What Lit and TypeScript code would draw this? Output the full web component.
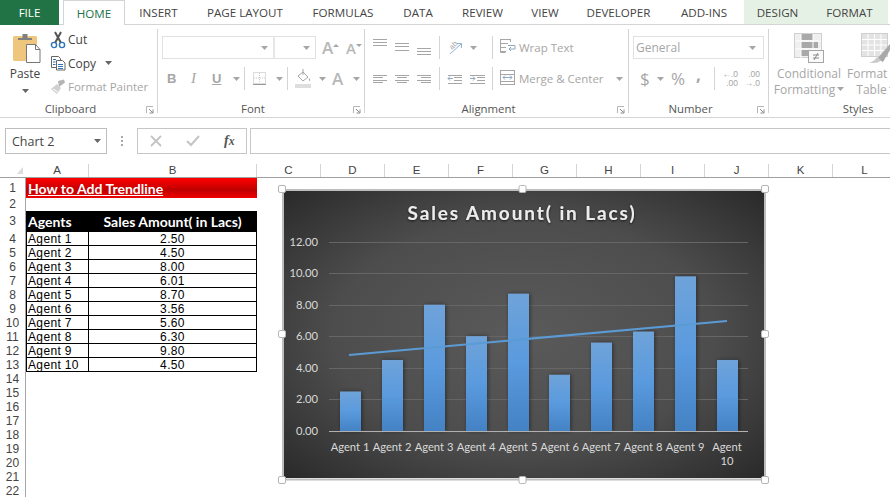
import { LitElement, html, svg, css } from "lit";
import { customElement } from "lit/decorators.js";

const G = "#a6a6a6";
const box = (w: number, c: unknown = "") => html`<span class="box" style="width:${w}px">${c}</span>`;
const ic = (w: number, h: number, c: unknown) => html`<svg class="ic" width=${w} height=${h} viewBox="0 0 ${w} ${h}">${c}</svg>`;
const caret = (col = G) => html`<svg class="ic" width="7" height="4" viewBox="0 0 7 4"><path d="M0 0h7L3.5 4z" fill=${col}/></svg>`;
const sep = () => html`<span class="sep"></span>`;
const launcher = () => html`<svg class="launch" width="8" height="8" viewBox="0 0 8 8"><path d="M.5 7V.5H7" fill="none" stroke="#b5b5b5"/><path d="M3 3l3.5 3.5M7 3.5V7H3.5" fill="none" stroke="#8a8a8a"/></svg>`;
const lines = (rows: number[][], col = G) => svg`<path d=${rows.map((r) => `M${r[0]} ${r[2] + 0.5}H${r[1]}`).join("")} stroke=${col} fill="none"/>`;

const TABS = [
  ["INSERT", 67], ["PAGE LAYOUT", 106], ["FORMULAS", 90], ["DATA", 60], ["REVIEW", 69], ["VIEW", 56], ["DEVELOPER", 91], ["ADD-INS", 80],
] as [string, number][];
const COLS = [["A", 63], ["B", 168], ["C", 64], ["D", 64], ["E", 64], ["F", 64], ["G", 64], ["H", 64], ["I", 64], ["J", 64], ["K", 64], ["L", 64]] as [string, number][];
const DATA = [["Agent 1", "2.50"], ["Agent 2", "4.50"], ["Agent 3", "8.00"], ["Agent 4", "6.01"], ["Agent 5", "8.70"], ["Agent 6", "3.56"], ["Agent 7", "5.60"], ["Agent 8", "6.30"], ["Agent 9", "9.80"], ["Agent 10", "4.50"]];

const scissors = ic(16, 18, svg`
  <path d="M5 1l6 11M11 1L5 12" stroke="#555" stroke-width="2" fill="none"/>
  <circle cx="4" cy="14" r="2.6" fill="none" stroke="#2f75b5" stroke-width="1.4"/>
  <circle cx="12" cy="14" r="2.6" fill="none" stroke="#2f75b5" stroke-width="1.4"/>`);
const copyIcon = ic(16, 16, svg`
  <path d="M1.5 1.5h7l2 2v9h-9z" fill="#fff" stroke="#666"/>
  <path d="M6.5 5.5h6l2.5 2.5v7h-8.5z" fill="#fff" stroke="#666"/>
  <path d="M3 4.5h3M3 7h2.500M3 9.500h2.500M8 9.500h5M8 11.500h5M8 13.500h5" stroke="#2f75b5" fill="none"/>`);
const painter = ic(16, 16, svg`
  <path d="M8 2l6-1.500 1 3-6 4.500z" fill="#b5b5b5"/>
  <path d="M1 10l6-5 4 4-4 6z" fill="#d0d0d0"/>
  <path d="M3 10l5 3" stroke="#fff"/>`);
const pasteIcon = ic(32, 30, svg`<g transform="translate(3 0)">
  <rect x="1" y="3" width="24" height="25" rx="1.500" fill="#eec67e"/>
  <path d="M6 7V5h4.500V1h5v4H20v2z" fill="#7f7f7f"/>
  <path d="M14.500 11.500h9l4.500 5v13h-13.500z" fill="#fff" stroke="#777"/>
  <path d="M23.500 11.500v5H28" fill="none" stroke="#777"/></g>`);

const ALIGN_V = [
  [[0, 14, 3], [0, 14, 6], [0, 14, 9]],
  [[0, 14, 7], [0, 14, 10], [0, 14, 14]],
  [[0, 14, 12], [0, 14, 15], [0, 14, 18]],
];
const ALIGN_H = [
  [[0, 14, 8], [0, 10, 10], [0, 14, 13], [0, 10, 15]],
  [[0, 14, 8], [2, 12, 10], [0, 14, 13], [2, 12, 15]],
  [[0, 14, 8], [4, 14, 10], [0, 14, 13], [4, 14, 15]],
];
const orient = ic(16, 23, svg`
  <text x="0" y="0" transform="translate(5 14) rotate(-45)" font-family="Liberation Sans" font-size="7.500" fill="${G}">ab</text>
  <path d="M3 18L14 8" stroke="#8fb3d5"/><path d="M10 7.500h4.500V12" stroke="#8fb3d5" fill="none"/>`);
const wrapIcon = ic(17, 23, svg`
  ${lines([[0, 11, 3], [0, 8, 7], [0, 6, 11], [0, 6, 15]])}
  <path d="M.5 3.500v13h5M.5 3.500h10V6" fill="none" stroke="${G}"/>
  <path d="M8 9.500h7v3.500H9M11 11l-2 2 2 2" fill="none" stroke="#8fa8c0"/>`);
const mergeIcon = ic(16, 23, svg`
  <rect x=".5" y="3.500" width="14" height="14" fill="none" stroke="${G}"/>
  ${lines([[1, 14, 7], [1, 14, 14]])}
  <path d="M3 10.500h9M5 8.500l-2 2 2 2M10 8.500l2 2-2 2" fill="none" stroke="#8fa8c0"/>`);
const indent = (flip: boolean) => ic(16, 23, svg`
  ${lines([[flip ? 0 : 1, 15, 8], [7, 15, 10], [7, 15, 13], [flip ? 0 : 1, 15, 16]])}
  <path d=${flip ? "M0 11.500h5M3 9.500l2 2-2 2" : "M1 11.500h5M3 9.500l-2 2 2 2"} fill="none" stroke="#8fa8c0"/>`);
const bordersIcon = ic(14, 23, svg`
  <rect x=".5" y="5.500" width="12" height="11" fill="none" stroke="#b9b9b9" stroke-dasharray="1 1"/>
  <path d="M6.500 6v10M1 11h11" stroke="#c9c9c9" stroke-dasharray="1 1"/>
  <path d="M0 17.500h13" stroke="#9a9a9a"/>`);
const fillIcon = ic(17, 23, svg`
  <path d="M3 9l5-4 5 5-5 4z" fill="#fff" stroke="${G}"/>
  <path d="M8 2v6" stroke="${G}"/><path d="M14 11c1 1 1.500 2 1 3-1 0-1.500-1-1-3z" fill="${G}"/>
  <rect x="0" y="17" width="16" height="4" fill="#dedede"/>`);
const condIcon = ic(30, 30, svg`
  <rect x=".5" y=".5" width="27" height="24" fill="#efefef" stroke="#cfcfcf"/>
  <rect x="7" y="1" width="12" height="6" fill="#a9a9a9"/>
  <rect x="7" y="9" width="17" height="6" fill="#a9a9a9"/>
  <rect x="7" y="17" width="7" height="6" fill="#a9a9a9"/>
  <path d="M7 1v24M19 1v24M1 8h26M1 16h26" stroke="#fff"/>
  <rect x="14.500" y="17.500" width="15" height="12" fill="#fafafa" stroke="#a6a6a6"/>
  <path d="M19 22h6M19 25h6M24 20l-4 7" stroke="#8a8a8a" fill="none"/>`);
const tableIcon = ic(30, 30, svg`
  <rect x=".5" y=".5" width="26" height="23" fill="#e3e3e3" stroke="#cfcfcf"/>
  <path d="M7 1v22M13.500 1v22M20 1v22M1 6.500h25M1 12h25M1 17.500h25" stroke="#fff"/>
  <path d="M16 26l13-15v6L22 29z" fill="#a9a9a9"/>
  <path d="M8 30c4-1 6-3 8-6l4 3c-2 3-6 3-12 3z" fill="#c9c9c9"/>`);

const CX = [350, 392, 434, 476, 518, 559.5, 601, 643, 685, 727];
const V = [2.5, 4.5, 8, 6.01, 8.7, 3.56, 5.6, 6.3, 9.8, 4.5];
const Y0 = 431;
const UNIT = 15.78;
const HANDLES = [[282, 189], [522.5, 189], [765, 189], [282, 334], [765, 334], [282, 480], [522.5, 480], [765, 480]];

@customElement("app-chart")
class AppChart extends LitElement {
  static styles = css`
    :host { position: absolute; left: 276px; top: 20px; width: 496px; height: 302px; display: block; }
    svg { display: block; }
    text { font-family: "Open Sans", sans-serif; }
    .t { font-family: Lato, sans-serif; font-weight: 700; font-size: 19px; letter-spacing: 1.9px; fill: #ececec; }
    .l { font-family: Lato, sans-serif; font-size: 11.2px; fill: #d9d9d9; }
  `;
  render() {
    return html`<svg width="496" height="302" viewBox="276 184 496 302">
      <defs>
        <radialGradient id="bg" cx="50%" cy="50%" r="72%">
          <stop offset="0" stop-color="#5a5a5a"/><stop offset=".55" stop-color="#4d4d4d"/><stop offset="1" stop-color="#282828"/>
        </radialGradient>
        <linearGradient id="bar" x1="0" y1="0" x2="0" y2="1">
          <stop offset="0" stop-color="#6fa3d9"/><stop offset=".5" stop-color="#5a9ade"/><stop offset="1" stop-color="#4382c4"/>
        </linearGradient>
        <filter id="sh" x="-30%" y="-10%" width="160%" height="120%"><feDropShadow dx="1" dy="0" stdDeviation="2" flood-color="#000" flood-opacity=".45"/></filter>
        <filter id="ts" x="-5%" y="-20%" width="110%" height="150%"><feDropShadow dx="0" dy="1" stdDeviation=".8" flood-color="#000" flood-opacity=".7"/></filter>
      </defs>
      <rect x="284" y="191" width="480" height="287" fill="url(#bg)"/>
      <rect x="283" y="190" width="482" height="289.500" fill="none" stroke="#bdbdbd" stroke-width="2"/>
      <text class="t" x="522" y="220" text-anchor="middle" filter="url(#ts)">Sales Amount( in Lacs)</text>
      ${[12, 10, 8, 6, 4, 2].map((v) => svg`<path d="M329 ${Math.round(Y0 - v * UNIT) + 0.5}H748" stroke="#666" fill="none"/>`)}
      ${[12, 10, 8, 6, 4, 2, 0].map((v) => svg`<text class="l" x="318" y=${Y0 - v * UNIT + 4} text-anchor="end">${v.toFixed(2)}</text>`)}
      ${CX.map((c, i) => svg`<rect x=${Math.round(c - 10.5)} y=${Y0 - V[i] * UNIT} width="21" height=${V[i] * UNIT} fill="url(#bar)" filter="url(#sh)"/>`)}
      <path d="M329 431.500H748" stroke="#b0b0b0" fill="none"/>
      <path d="M349 355L727 321" stroke="#5b9bd5" stroke-width="2.200" fill="none"/>
      ${CX.slice(0, 9).map((c, i) => svg`<text class="l" x=${c} y="451" text-anchor="middle">Agent ${i + 1}</text>`)}
      <text class="l" x="727" y="451" text-anchor="middle">Agent</text>
      <text class="l" x="727" y="465" text-anchor="middle">10</text>
      ${HANDLES.map((h) => svg`<rect x=${h[0] - 3.5} y=${h[1] - 3.5} width="7" height="7" rx="1.500" fill="#fff" stroke="#b5b5b5"/>`)}
    </svg>`;
  }
}

@customElement("app-root")
export class AppRoot extends LitElement {
  static styles = css`
    :host { display: block; width: 890px; height: 497px; overflow: hidden; background: #fff; color: #444; font-family: "Open Sans", sans-serif; font-size: 12px; }
    .app { display: flex; flex-direction: column; height: 497px; }
    .box { display: inline-flex; align-items: center; height: 23px; flex: none; white-space: nowrap; }
    .ic { display: block; flex: none; }

    .tabs { display: flex; height: 25px; box-sizing: border-box; border-bottom: 1px solid #d4d4d4; flex: none; }
    .tab { display: flex; align-items: center; justify-content: center; height: 24px; box-sizing: border-box; font-size: 11.6px; color: #444; flex: none; }
    .file { width: 59px; height: 25px; background: #217346; color: #fff; margin-right: 4px; }
    .home { width: 62px; height: 25px; background: #fff; color: #217346; border: 1px solid #d4d4d4; border-bottom: 0; }
    .ctx { background: #e6f1e6; height: 24px; }

    .ribbon { display: flex; height: 93px; flex: none; box-sizing: border-box; border-bottom: 1px solid #d4d4d4; overflow: hidden; }
    .group { position: relative; display: flex; flex-direction: column; flex: none; box-sizing: border-box; height: 92px; }
    .group::after { content: ""; position: absolute; right: 0; top: 4px; bottom: 4px; width: 1px; background: #d4d4d4; }
    .g-clip { width: 158px; } .g-font { width: 207px; } .g-align { width: 264px; } .g-num { width: 140px; } .g-sty { width: 121px; }
    .g-sty::after { display: none; }
    .content { flex: 1; min-height: 0; }
    .stack { display: flex; flex-direction: column; gap: 8px; padding-top: 11px; }
    .row { display: flex; height: 23px; align-items: center; }
    .pad4 { padding-left: 4px; } .pad8 { padding-left: 8px; }
    .label { position: relative; height: 16px; line-height: 16px; text-align: center; font-size: 11.4px; color: #555; flex: none; padding-right: 17px; }
    .g-sty .label { padding-right: 0; padding-left: 57px; }
    .launch { position: absolute; right: 4px; top: 5px; }
    .sep { display: block; width: 1px; height: 23px; background: #d4d4d4; }

    .clip { display: flex; }
    .paste { width: 50px; display: flex; flex-direction: column; align-items: center; padding-top: 8px; }
    .paste .pt { height: 16px; line-height: 16px; margin-top: 3px; font-size: 12px; color: #444; }
    .paste .ic:last-child { margin-top: 7px; }
    .actions { display: flex; flex-direction: column; padding-top: 3px; }
    .act { display: flex; align-items: center; height: 23.5px; gap: 2px; font-size: 12px; }
    .act .i { width: 16px; display: flex; justify-content: center; }
    .act .c { margin-left: 7px; }

    .field { height: 23px; box-sizing: border-box; border: 1px solid #e1e1e1; background: #fff; display: flex; align-items: center; justify-content: flex-end; padding: 0 5px; flex: none; }
    .f1 { width: 111px; border-right: 0; } .f2 { width: 43px; border-left: 2px solid #e6e6e6; }
    .f3 { width: 131px; justify-content: space-between; color: #a6a6a6; padding: 0 7px 0 2px; font-size: 12px; }
    .bg { font-family: "Open Sans", sans-serif; font-size: 17px; line-height: 20px; color: #b8b8b8; font-weight: 600; }
    .small { font-size: 15px; }
    .bb { font-weight: 700; font-size: 13px; font-family: "Liberation Sans", sans-serif; color: #a6a6a6; }
    .ii { font-style: italic; font-family: "Liberation Serif", serif; font-size: 15px; color: #a6a6a6; }
    .uu { text-decoration: underline; }
    .txt { color: #a6a6a6; font-size: 11.5px; }
    .numsym { color: #a6a6a6; font-size: 17px; line-height: 20px; }
    .cm { font-weight: 700; transform: translateY(-4px); display: block; }
    .dec { display: flex; flex-direction: column; color: #a6a6a6; font-size: 8.5px; line-height: 9px; text-align: right; width: 16px; font-family: "Liberation Sans", sans-serif; }

    .big { display: flex; flex-direction: column; align-items: center; padding-top: 8px; flex: none; font-size: 12px; color: #a6a6a6; white-space: nowrap; }
    .big .ic:first-child { margin-bottom: 3px; }
    .big .ln { height: 16px; line-height: 16px; display: flex; align-items: center; gap: 2px; }
    .styles { display: flex; padding-left: 2px; }
    .b1 { width: 76px; } .b2 { width: 58px; }
    .b2 .fa { align-self: flex-start; }

    .fbar { height: 46px; flex: none; display: flex; align-items: flex-start; padding-top: 10px; box-sizing: border-box; }
    .name { width: 102px; height: 26px; margin-left: 5px; box-sizing: border-box; border: 1px solid #bdbdbd; display: flex; align-items: center; justify-content: space-between; padding: 0 5px 0 6px; font-size: 12.5px; color: #444; flex: none; }
    .dots { width: 30px; display: flex; flex-direction: column; gap: 2px; align-items: center; padding-top: 8px; flex: none; }
    .dots i { width: 2px; height: 2px; background: #a9a9a9; display: block; }
    .fx { width: 110px; height: 26px; box-sizing: border-box; border: 1px solid #c6c6c6; display: flex; align-items: center; flex: none; margin-right: 3px; padding-left: 12px; gap: 24px; }
    .fxt { font-family: "Liberation Serif", serif; font-style: italic; font-weight: 700; font-size: 14px; color: #555; }
    .input { flex: 1; height: 26px; box-sizing: border-box; border: 1px solid #c6c6c6; border-right: 0; }

    .sheet { position: relative; flex: 1; min-height: 0; overflow: hidden; }
    .chead { display: flex; height: 14px; box-sizing: border-box; border-bottom: 1px solid #9f9f9f; }
    .corner { width: 26px; flex: none; display: flex; justify-content: flex-end; padding: 3px 3px 0 0; box-sizing: border-box; border-right: 0; }
    .ch { flex: none; box-sizing: border-box; border-right: 1px solid #d4d4d4; height: 13px; line-height: 13px; text-align: center; font-size: 11.5px; color: #444; font-family: "Liberation Sans", sans-serif; }
    .r { display: flex; height: 14px; }
    .r1 { height: 20px; } .r2 { height: 13px; } .r3 { height: 21px; }
    .rh { width: 26px; flex: none; box-sizing: border-box; border-right: 1px solid #a6a6a6; text-align: center; font-size: 12px; line-height: 13px; color: #444; display: flex; align-items: center; justify-content: center; font-family: "Liberation Sans", sans-serif; }
    .cell { font-family: "Liberation Sans", sans-serif; font-size: 12px; letter-spacing: .35px; line-height: 13px; color: #000; box-sizing: border-box; display: flex; align-items: center; flex: none; white-space: nowrap; }
    .title { width: 231px; padding-left: 2px; font-family: Lato, sans-serif; letter-spacing: 0; color: #fff; font-weight: 700; font-size: 14px; text-decoration: underline; background: linear-gradient(#ff0000, #c00000 60%, #f00000); }
    .a { width: 63px; padding: 1px 0 0 1px; border: 1px solid #000; border-top: 0; }
    .b { width: 168px; padding-top: 1px; justify-content: center; border-right: 1px solid #000; border-bottom: 1px solid #000; }
    .hd { background: #000; color: #fff; font-family: Lato, sans-serif; letter-spacing: 0; font-weight: 700; border-color: #000; font-size: 14px; }
  `;

  render() {
    return html`<div class="app">
      <div class="tabs">
        <div class="tab file">FILE</div>
        <div class="tab home">HOME</div>
        ${TABS.map((t) => html`<div class="tab" style="width:${t[1]}px">${t[0]}</div>`)}
        <div class="tab ctx" style="width:67px">DESIGN</div>
        <div class="tab ctx" style="width:77px">FORMAT</div>
      </div>

      <div class="ribbon">
        <div class="group g-clip">
          <div class="content clip">
            <div class="paste">${pasteIcon}<span class="pt">Paste</span>${caret("#666")}</div>
            <div class="actions">
              <div class="act"><span class="i">${scissors}</span><span>Cut</span></div>
              <div class="act"><span class="i">${copyIcon}</span><span>Copy</span><span class="c">${caret("#666")}</span></div>
              <div class="act"><span class="i">${painter}</span><span class="txt">Format Painter</span></div>
            </div>
          </div>
          <div class="label">Clipboard${launcher()}</div>
        </div>

        <div class="group g-font">
          <div class="content stack pad4">
            <div class="row">
              <div class="field f1">${caret()}</div><div class="field f2">${caret()}</div>
              ${box(6)}${box(24, html`<span class="bg">A</span><svg class="ic" width="6" height="10" viewBox="0 0 6 10"><path d="M0 4l3-3 3 3z" fill="${G}"/></svg>`)}
              ${box(23, html`<span class="bg small">A</span><svg class="ic" width="6" height="10" viewBox="0 0 6 10"><path d="M0 1h6L3 4z" fill="${G}"/></svg>`)}
            </div>
            <div class="row">
              ${box(5)}${box(24, html`<span class="bb">B</span>`)}${box(21, html`<span class="ii">I</span>`)}
              ${box(21, html`<span class="bb uu">U</span>`)}${box(11, caret())}${sep()}${box(8)}
              ${box(23, bordersIcon)}${box(11, caret())}${sep()}${box(7)}
              ${box(24, fillIcon)}${box(13, caret())}${box(21, html`<span class="bg">A</span>`)}${caret()}
            </div>
          </div>
          <div class="label">Font${launcher()}</div>
        </div>

        <div class="group g-align">
          <div class="content stack pad8">
            <div class="row">
              ${ALIGN_V.map((a) => box(22, ic(14, 23, lines(a))))}${box(8, sep())}
              ${box(23, orient)}${box(22, caret())}${box(8, sep())}
              ${box(19, wrapIcon)}<span class="txt">Wrap Text</span>
            </div>
            <div class="row">
              ${ALIGN_H.map((a) => box(22, ic(14, 23, lines(a))))}${box(8, sep())}
              ${box(23, indent(false))}${box(22, indent(true))}${box(8, sep())}
              ${box(19, mergeIcon)}${box(97, html`<span class="txt">Merge &amp; Center</span>`)}${caret()}
            </div>
          </div>
          <div class="label">Alignment${launcher()}</div>
        </div>

        <div class="group g-num">
          <div class="content stack pad4">
            <div class="row"><div class="field f3"><span>General</span>${caret()}</div></div>
            <div class="row">
              ${box(7)}${box(17, html`<span class="numsym">$</span>`)}${box(14, caret())}
              ${box(25, html`<span class="numsym">%</span>`)}${box(18, html`<span class="numsym cm">,</span>`)}${box(8, sep())}
              ${box(22, html`<span class="dec"><span>←.0</span><span>.00</span></span>`)}
              ${box(20, html`<span class="dec"><span>.00</span><span>→.0</span></span>`)}
            </div>
          </div>
          <div class="label">Number${launcher()}</div>
        </div>

        <div class="group g-sty">
          <div class="content styles">
            <div class="big b1">${condIcon}<span class="ln">Conditional</span><span class="ln">Formatting ${caret()}</span></div>
            <div class="big b2">${tableIcon}<span class="ln fa">Format as</span><span class="ln">Table ${caret()}</span></div>
          </div>
          <div class="label">Styles</div>
        </div>
      </div>

      <div class="fbar">
        <div class="name"><span>Chart 2</span>${caret("#666")}</div>
        <div class="dots"><i></i><i></i><i></i></div>
        <div class="fx">
          ${ic(12, 12, svg`<path d="M1 1l10 10M11 1L1 11" stroke="#c4c4c4" stroke-width="1.800"/>`)}
          ${ic(14, 12, svg`<path d="M1 6l4 4 8-9" fill="none" stroke="#c4c4c4" stroke-width="2"/>`)}
          <span class="fxt">f<small>x</small></span>
        </div>
        <div class="input"></div>
      </div>

      <div class="sheet">
        <div class="chead">
          <div class="corner">${ic(6, 7, svg`<path d="M6 0v7H0z" fill="#dcdcdc"/>`)}</div>
          ${COLS.map((c) => html`<div class="ch" style="width:${c[1]}px">${c[0]}</div>`)}
        </div>
        <div class="r r1"><div class="rh">1</div><div class="cell title">How to Add Trendline</div></div>
        <div class="r r2"><div class="rh">2</div></div>
        <div class="r r3"><div class="rh">3</div><div class="cell a hd">Agents</div><div class="cell b hd">Sales Amount( in Lacs)</div></div>
        ${DATA.map((d, i) => html`<div class="r"><div class="rh">${i + 4}</div><div class="cell a">${d[0]}</div><div class="cell b">${d[1]}</div></div>`)}
        ${[14, 15, 16, 17, 18, 19, 20, 21, 22].map((n) => html`<div class="r"><div class="rh">${n}</div></div>`)}
        <app-chart></app-chart>
      </div>
    </div>`;
  }
}
void AppChart;
